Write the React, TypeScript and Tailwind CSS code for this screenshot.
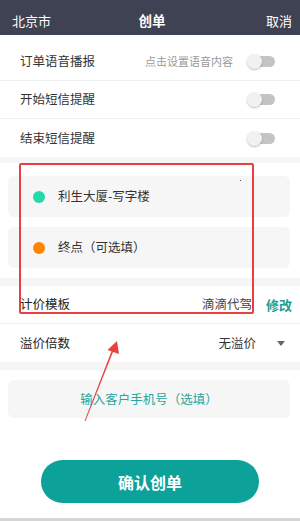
import React from "react";

const font = { fontFamily: '"Noto Sans CJK SC", "Noto Sans", sans-serif' };

function Toggle() {
  return (
    <div className="relative w-[28px] h-[16px] flex items-center">
      <div className="absolute right-0 w-[24px] h-[11px] rounded-full bg-[#c4c4c4]" />
      <div className="absolute left-0 w-[15px] h-[15px] rounded-full bg-[#f1f1f1] shadow-[0_1px_2px_rgba(0,0,0,0.25)]" />
    </div>
  );
}

function SwitchRow({ label, hint, border }: { label: string; hint?: string; border?: boolean }) {
  return (
    <div className={`h-[38px] flex items-center justify-between pl-[20px] pr-[25px] ${border ? "border-b border-[#efefef]" : ""}`}>
      <span className="text-[12.5px] text-[#333]">{label}</span>
      <div className="flex items-center gap-[14px]">
        {hint && <span className="text-[11px] text-[#9a9a9a]">{hint}</span>}
        <Toggle />
      </div>
    </div>
  );
}

export default function App() {
  return (
    <div className="relative w-[300px] h-[521px] bg-white overflow-hidden flex flex-col" style={font}>
      <div className="h-[35px] bg-[#3e4252] grid grid-cols-[1fr_auto_1fr] items-center pl-[12px] pr-[8px] pt-[6px] text-white text-[13px] shrink-0">
        <span>北京市</span>
        <span className="font-bold text-[13.5px]">创单</span>
        <span className="justify-self-end">取消</span>
      </div>
      <div className="pt-[8px]">
        <SwitchRow label="订单语音播报" hint="点击设置语音内容" border />
        <SwitchRow label="开始短信提醒" border />
        <SwitchRow label="结束短信提醒" />
      </div>
      <div className="h-[6px] bg-[#f5f5f5] shrink-0" />
      <div className="pt-[13px] pb-[10px] pl-[8px] pr-[10px] flex flex-col gap-[10px]">
        <div className="h-[41px] rounded-[6px] bg-[#f6f6f6] flex items-center pl-[25px] gap-[13px]">
          <span className="w-[12px] h-[12px] rounded-full bg-[#22dba8]" />
          <span className="text-[12.5px] text-[#333]">利生大厦-写字楼</span>
        </div>
        <div className="h-[41px] rounded-[6px] bg-[#f6f6f6] flex items-center pl-[25px] gap-[13px]">
          <span className="w-[12px] h-[12px] rounded-full bg-[#ff8400]" />
          <span className="text-[12.5px] text-[#333]">终点（可选填）</span>
        </div>
      </div>
      <div className="h-[8px] bg-[#f5f5f5] shrink-0" />
      <div className="h-[38px] flex items-center justify-between pl-[20px] pr-[8px] border-b border-[#efefef]">
        <span className="text-[12.5px] text-[#222]">计价模板</span>
        <div className="flex items-center gap-[14px]">
          <span className="text-[12.5px] text-[#444]">滴滴代驾</span>
          <span className="text-[13px] font-bold text-[#1a9e96]">修改</span>
        </div>
      </div>
      <div className="h-[38px] flex items-center justify-between pl-[20px] pr-[15px]">
        <span className="text-[12.5px] text-[#222]">溢价倍数</span>
        <div className="flex items-center gap-[21px]">
          <span className="text-[12.5px] text-[#333]">无溢价</span>
          <svg width="8" height="5" viewBox="0 0 8 5"><path d="M0 0h8L4 5z" fill="#666" /></svg>
        </div>
      </div>
      <div className="h-[8px] bg-[#f5f5f5] shrink-0" />
      <div className="pt-[10px] pl-[8px] pr-[10px]">
        <div className="h-[38px] rounded-[6px] bg-[#f6f6f6] flex items-center justify-center">
          <span className="text-[12.5px] text-[#2aa59c]">输入客户手机号（选填）</span>
        </div>
      </div>
      <div className="mt-[42px] flex justify-center">
        <button className="w-[218px] h-[43px] rounded-full bg-[#0ca199] text-white text-[16px] font-bold">确认创单</button>
      </div>
      <div className="mt-auto h-[3px] bg-[#d6d6d6] shrink-0" />

      <div className="absolute left-[19px] top-[163px] w-[235px] h-[151px] border-2 border-[#e8403f] rounded-[2px]" />
      <div className="absolute left-[240px] top-[180px] w-[1px] h-[1px] bg-[#555]" />
      <svg className="absolute left-0 top-0 pointer-events-none" width="300" height="521" viewBox="0 0 300 521">
        <path d="M84.5 421 L112 350 L113.6 350.6 L85.5 421 Z" fill="#e8403f" />
        <path d="M117 341 L107.5 350 L119 354 Z" fill="#e8403f" />
      </svg>
    </div>
  );
}
